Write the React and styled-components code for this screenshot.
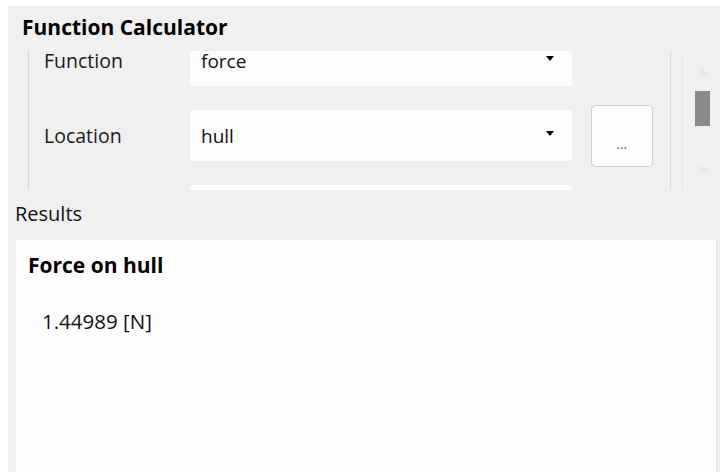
import styled, { createGlobalStyle } from 'styled-components';

const GlobalStyle = createGlobalStyle`
  html, body {
    margin: 0;
    padding: 0;
    background: #ffffff;
  }
  body {
    font-family: "Open Sans", "Noto Sans", sans-serif;
    color: #111;
  }
`;

const Panel = styled.div`
  margin: 6px 0 0 8px;
  width: 712px;
  height: 466px;
  background: #f0f0f0;
  display: flex;
  flex-direction: column;
  overflow: hidden;
`;

const Title = styled.div`
  font-weight: 700;
  font-size: 21px;
  line-height: 24px;
  padding: 9px 0 0 14px;
  height: 33px;
  box-sizing: border-box;
  color: #000;
  white-space: nowrap;
`;

const FormArea = styled.div`
  margin-top: 12px;
  height: 139px;
  display: flex;
  flex-direction: row;
`;

const ScrollView = styled.div`
  margin-left: 20px;
  width: 641px;
  border-left: 1px solid #d6d6d6;
  border-right: 1px solid #d9d9d9;
  overflow: hidden;
`;

// content is scrolled a little, so the first row is cut at the top
const FormGrid = styled.div`
  margin-top: -16px;
  display: grid;
  grid-template-columns: 161px 382px 19px 62px;
  grid-auto-rows: 51px;
  row-gap: 24px;
  align-items: center;
`;

const Label = styled.div`
  grid-column: 1;
  padding-left: 15px;
  font-size: 19.5px;
  line-height: 18px;
  color: #1a1a1a;
  white-space: nowrap;
`;

const Combo = styled.div`
  grid-column: 2;
  height: 51px;
  box-sizing: border-box;
  background: #fcfcfc;
  border-radius: 3px;
  padding: 0 11px;
  display: flex;
  align-items: center;
  font-size: 19px;
  line-height: 18px;
  color: #111;
`;

const Arrow = styled.svg`
  width: 8px;
  height: 5px;
  margin-left: auto;
  margin-right: 7px;
  margin-bottom: 4px;
`;

const MoreButton = styled.button`
  grid-column: 4;
  width: 62px;
  height: 62px;
  box-sizing: border-box;
  border: 1px solid #cfcfcf;
  border-radius: 5px;
  background: #fdfdfd;
  color: #6f6f6f;
  font-family: inherit;
  font-size: 11px;
  font-weight: 700;
  letter-spacing: 0.5px;
  padding: 18px 0 0 0;
  align-self: center;
`;

const ScrollTrack = styled.div`
  margin-left: 14px;
  width: 1px;
  background: #fbfbfb;
`;

const ScrollBar = styled.div`
  margin-left: 9px;
  width: 15px;
  display: flex;
  flex-direction: column;
  align-items: center;
`;

const StepArrow = styled.svg`
  width: 15px;
  height: 10px;
  margin-top: ${(p) => p.$top}px;
`;

const Thumb = styled.div`
  width: 15px;
  height: 35px;
  margin-top: 16px;
  background: #8a8a8a;
`;

const ResultsLabel = styled.div`
  font-size: 20px;
  line-height: 24px;
  padding: 12px 0 0 7px;
  height: 50px;
  box-sizing: border-box;
  color: #111;
`;

const ResultsBox = styled.div`
  flex: 1;
  margin: 0 4px 0 8px;
  background: #fefefe;
  box-shadow: 1px 0 0 #e2e2e2;
  padding: 13px 0 0 12px;
`;

const ResultTitle = styled.div`
  font-weight: 700;
  font-size: 21px;
  line-height: 24px;
  color: #000;
`;

const ResultValue = styled.div`
  margin-top: 32px;
  padding-left: 14px;
  font-size: 20.5px;
  line-height: 24px;
  color: #111;
`;

function DropArrow() {
  return (
    <Arrow viewBox="0 0 8 5">
      <polygon points="0,0 8,0 4,5" fill="#000" />
    </Arrow>
  );
}

export default function App() {
  return (
    <>
      <GlobalStyle />
      <Panel>
        <Title>Function Calculator</Title>
        <FormArea>
          <ScrollView>
            <FormGrid>
              <Label>Function</Label>
              <Combo>
                force
                <DropArrow />
              </Combo>
              <Label>Location</Label>
              <Combo>
                hull
                <DropArrow />
              </Combo>
              <MoreButton>...</MoreButton>
              <Combo>
                <DropArrow />
              </Combo>
            </FormGrid>
          </ScrollView>
          <ScrollTrack />
          <ScrollBar>
            <StepArrow $top={14} viewBox="0 0 15 10">
              <polygon points="2,10 13,10 7.5,2" fill="#e8e8e8" />
            </StepArrow>
            <Thumb />
            <StepArrow $top={41} viewBox="0 0 15 10">
              <polygon points="2,0 13,0 7.5,8" fill="#e8e8e8" />
            </StepArrow>
          </ScrollBar>
        </FormArea>
        <ResultsLabel>Results</ResultsLabel>
        <ResultsBox>
          <ResultTitle>Force on hull</ResultTitle>
          <ResultValue>1.44989 [N]</ResultValue>
        </ResultsBox>
      </Panel>
    </>
  );
}
